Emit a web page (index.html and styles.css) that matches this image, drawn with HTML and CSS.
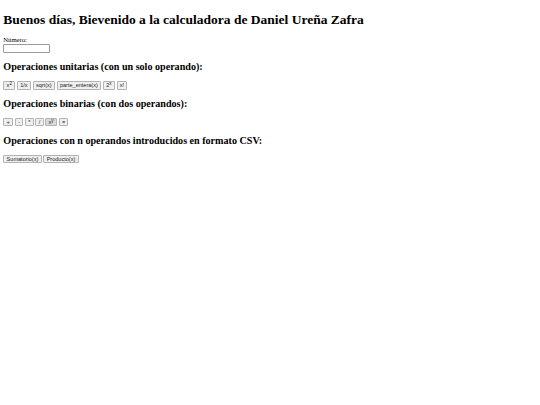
FILE: index.html
```html
<!DOCTYPE html>
<html>
  <head>
    <meta charset="utf-8">
    <link rel="stylesheet" href="styles.css">
  </head>
  <body>
    <h1>Buenos días, Bievenido a la calculadora de Daniel Ureña Zafra</h1>
    <label for="numero">Número:</label><br>
    <input type="text" id="numero">

    <h2>Operaciones unitarias (con un solo operando):</h2>
    <div class="ops">
      <button>x<sup>2</sup></button>
      <button>1/x</button>
      <button>sqrt(x)</button>
      <button>parte_entera(x)</button>
      <button>2<sup>x</sup></button>
      <button>x!</button>
    </div>

    <h2>Operaciones binarias (con dos operandos):</h2>
    <div class="ops">
      <button>+</button>
      <button>-</button>
      <button>*</button>
      <button>/</button>
      <button class="active">x<sup>y</sup></button>
      <button>=</button>
    </div>

    <h2>Operaciones con n operandos introducidos en formato CSV:</h2>
    <div class="ops">
      <button>Sumatorio(x)</button>
      <button>Producto(x)</button>
    </div>
  </body>
</html>
```

FILE: styles.css
```css
body {
  margin: 3.3px;
  font-family: "Liberation Serif", serif;
  font-size: 6.67px;
  color: #000;
  background: #fff;
}
h1 {
  font-size: 13.5px;
  line-height: 15.3px;
  margin: 8.9px 0;
}
h2 {
  font-size: 10.1px;
  line-height: 11.5px;
  margin: 8.3px 0;
}
label {
  font-size: 6.67px;
  line-height: 7.7px;
}
input {
  box-sizing: border-box;
  font: 5.56px "Liberation Sans", sans-serif;
  width: 47px;
  height: 8.6px;
  padding: 0 1px;
  margin: 0;
  border: 1px solid #9a9a9a;
  border-radius: 1px;
}
.ops {
  display: flex;
  align-items: center;
  gap: 1.7px;
}
button {
  font: 5.56px "Liberation Sans", sans-serif;
  line-height: 6px;
  padding: 0.4px 2.3px;
  margin: 0;
  background: #efefef;
  border: 1px solid #b3b3b3;
  border-radius: 1px;
  color: #222;
}
button.active {
  background: #d9d9d9;
}
sup {
  font-size: 4.6px;
  line-height: 0;
  vertical-align: 2.5px;
}
```
